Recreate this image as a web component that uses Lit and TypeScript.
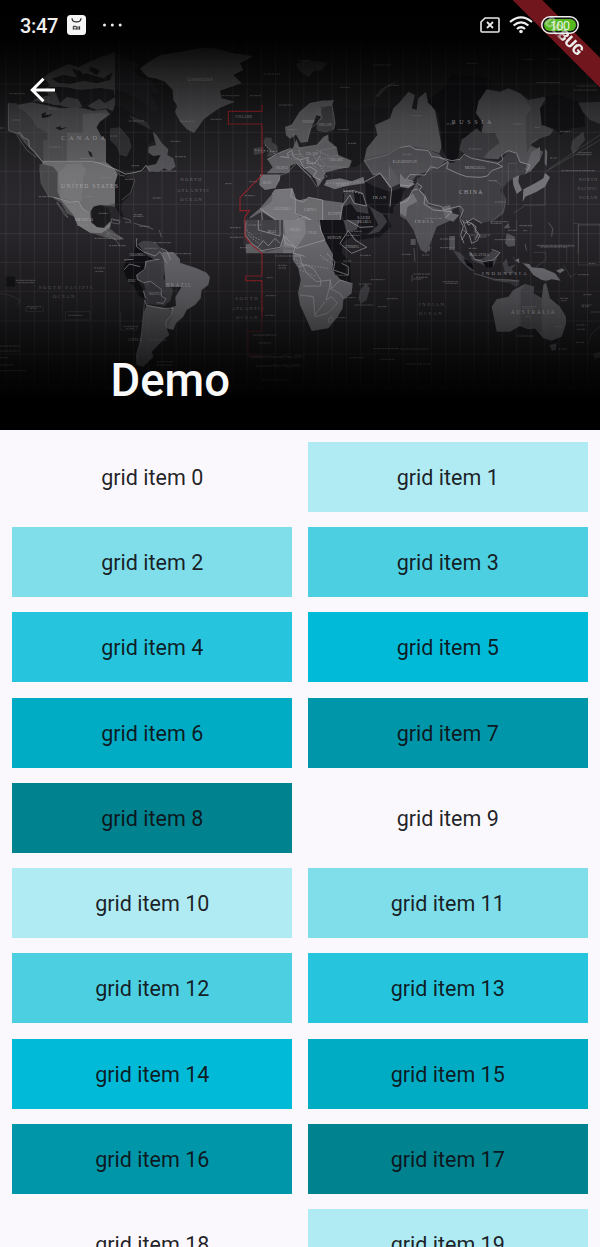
import { LitElement, html, svg, css } from "lit";
import { customElement } from "lit/decorators.js";

const SHADE_COUNT = 9;
const MERIDIANS = Array.from({ length: 43 }, (_, i) => 18 + i * 42.55);
const PARALLELS = [252, 397, 514, 613, 701, 787, 874, 963, 1062, 1166];

type Label = [string, number, number, number, number];
// text, x, y, size, letter spacing
const LABELS: Label[] = [
  ["CANADA", 184, 421, 19, 10],
  ["UNITED STATES", 184, 563, 17, 3.6],
  ["MEXICO", 224, 663, 14, 0],
  ["BRAZIL", 497, 860, 17, 3],
  ["RUSSIA", 1355, 372, 18, 11],
  ["CHINA", 1377, 582, 17, 4],
  ["MONGOLIA", 1394, 507, 11, 0.4],
  ["INDIA", 1244, 668, 14, 4],
  ["INDONESIA", 1446, 824, 15, 6.5],
  ["AUSTRALIA", 1532, 943, 17, 4.5],
  ["MALAYSIA", 1408, 769, 10, 1],
  ["KAZAKHSTAN", 1178, 490, 10, 0.5],
  ["IRAN", 1118, 597, 13, 3],
  ["SAUDI", 1072, 656, 11, 1],
  ["ARABIA", 1070, 668, 10, 1],
  ["ALGERIA", 820, 629, 12, 0],
  ["LIBYA", 913, 633, 12, 0],
  ["EGYPT", 984, 645, 12, 0],
  ["SUDAN", 982, 717, 12, 0],
  ["MALI", 803, 699, 10, 0],
  ["NIGER", 868, 692, 10, 0],
  ["CHAD", 922, 702, 10, 0],
  ["TURKEY", 1008, 557, 10, 0],
  ["ETHIOPIA", 1036, 743, 9, 0],
  ["CHILE", 385, 1022, 11, 2],
  ["PERU", 383, 847, 9, 0],
  ["BOLIVIA", 447, 886, 9, 0],
  ["COLOMBIA", 388, 769, 9, 0],
  ["FRANCE", 828, 506, 9, 0],
  ["SPAIN", 788, 553, 9, 0],
  ["POLAND", 918, 464, 9, 0],
  ["SWEDEN", 906, 370, 9, 0],
  ["FINLAND", 956, 379, 9, 0],
  ["NORWAY", 861, 391, 8, 0],
  ["GERMANY", 868, 465, 8, 0],
  ["UKRAINE", 988, 484, 9, 0],
  ["ICELAND", 706, 355, 10, 1],
  ["Greenland", 562, 244, 16, 1],
];
const OCEANS: Label[] = [
  ["NORTH", 541, 543, 14, 4],
  ["ATLANTIC", 532, 575, 14, 4],
  ["OCEAN", 541, 603, 14, 4],
  ["SOUTH  PACIFIC", 116, 867, 14, 5],
  ["OCEAN", 159, 894, 14, 4],
  ["SOUTH", 706, 899, 14, 5],
  ["ATLANTIC", 696, 930, 14, 4],
  ["OCEAN", 708, 958, 14, 4],
  ["NORTH", 1737, 542, 12, 3.5],
  ["PACIFIC", 1733, 570, 12, 2.2],
  ["OCEAN", 1737, 598, 12, 3],
  ["INDIAN", 1257, 918, 14, 5],
  ["OCEAN", 1257, 946, 14, 5],
  ["Coordinated Universal Time (UTC)", 742, 1074, 12, 0],
  ["Greenwich Mean Time (GMT)", 768, 1102, 11, 0],
];
// small captions drawn as thin strokes: x, y, width
const MARKS: [number, number, number][] = [
  [28, 281, 46], [36, 360, 26], [0, 384, 12], [148, 441, 36], [240, 475, 44], [300, 533, 32], [116, 590, 42],
  [205, 548, 26], [254, 590, 24], [395, 497, 22], [376, 538, 28], [484, 513, 44], [525, 470, 34], [512, 424, 30],
  [540, 364, 44], [386, 363, 46], [330, 408, 22], [458, 594, 24], [402, 644, 26], [400, 649, 30], [232, 676, 34],
  [418, 679, 30], [296, 640, 28], [338, 660, 20], [376, 667, 14], [283, 715, 54], [342, 717, 28], [327, 737, 50],
  [462, 728, 52], [434, 745, 40], [486, 761, 88], [282, 804, 32], [286, 814, 24], [48, 841, 58], [52, 848, 52],
  [80, 920, 44], [90, 925, 20], [206, 946, 42], [370, 979, 44], [378, 985, 24], [0, 1038, 62], [0, 1053, 60],
  [0, 1073, 24], [0, 1095, 42], [0, 1112, 80], [470, 1085, 50], [470, 1095, 48], [450, 1020, 50],
  [665, 287, 54], [750, 287, 34], [632, 358, 34], [836, 315, 42], [790, 222, 50], [895, 182, 32], [1014, 389, 32],
  [1044, 430, 26], [1020, 262, 30], [1120, 195, 54], [1164, 256, 32], [676, 551, 18], [734, 587, 30], [690, 683, 32],
  [690, 712, 40], [720, 743, 30], [748, 545, 24], [745, 675, 40], [825, 768, 54], [834, 796, 28], [836, 804, 22],
  [798, 887, 30], [796, 946, 28], [760, 1005, 70], [776, 1029, 38], [786, 1140, 76], [800, 833, 18],
  [911, 858, 40], [903, 886, 36], [966, 778, 30], [1006, 826, 40], [1040, 706, 40], [1052, 694, 34], [1080, 766, 32],
  [1030, 783, 24], [1112, 839, 42], [1076, 852, 40], [1064, 915, 56], [1036, 893, 30], [1160, 896, 34], [1134, 920, 28],
  [1010, 953, 30], [1120, 1046, 78], [1048, 1073, 44], [1140, 1078, 44], [1236, 347, 30], [1210, 463, 24],
  [1400, 190, 32], [1340, 372, 22], [1538, 372, 30], [1605, 382, 16], [1406, 447, 40], [1468, 542, 26],
  [1484, 606, 32], [1472, 665, 54], [1472, 670, 34], [1276, 655, 50], [1558, 677, 40], [1570, 692, 12],
  [1524, 691, 28], [1684, 512, 100], [1730, 464, 44], [1736, 458, 40], [1650, 474, 20], [1680, 394, 30],
  [1240, 822, 50], [1248, 832, 36], [1240, 837, 28], [1206, 763, 28], [1266, 765, 22], [1320, 717, 44],
  [1320, 743, 44], [1412, 705, 60], [1424, 711, 36], [1484, 719, 62], [1406, 745, 26], [1610, 736, 114],
  [1622, 741, 80], [1734, 824, 34], [1766, 791, 20], [1328, 845, 46], [1336, 850, 38], [1534, 843, 24],
  [1680, 895, 26], [1684, 902, 16], [1745, 915, 30], [1745, 920, 22], [1750, 884, 26], [1773, 936, 27], [1729, 975, 28],
  [1731, 988, 24], [1728, 1027, 24], [1565, 920, 44], [1567, 925, 36], [1577, 950, 16], [1550, 1008, 52],
  [1664, 980, 22], [1674, 1047, 28], [1200, 1047, 88], [1216, 1092, 78], [1610, 248, 70], [1730, 258, 60],
  [1722, 270, 70], [1570, 178, 30], [1640, 177, 40],
];

@customElement("world-map")
export class WorldMap extends LitElement {
  static styles = css`
    :host { display: block; width: 600px; height: 430px; }
    svg { display: block; width: 100%; height: 100%; }
    text { font-family: "Liberation Serif", serif; }
    .grid { stroke: #777479; stroke-width: 1.7; opacity: 0.36; fill: none; }
    .border { stroke: #a7a5a9; stroke-width: 2.1; fill: none; stroke-linejoin: round; }
    .thin { stroke: #858387; stroke-width: 1.6; fill: none; }
    .tag { fill: #aaa8ac; }
    .faint { fill: #747176; }
    .marks { stroke: #88858a; stroke-width: 3; stroke-dasharray: 7 2 4 1 10 2; opacity: 0.6; }
    .dateline { stroke: #a9222c; stroke-width: 3.4; fill: none; stroke-dasharray: 7 1.5; }
  `;

  render() {
    return html`<svg viewBox="0 0 1800 1290" aria-hidden="true">
      <defs>
        <linearGradient id="sea" x1="0" y1="0" x2="0" y2="1">
          <stop offset="0" stop-color="#111"/><stop offset=".3" stop-color="#222124"/>
          <stop offset=".45" stop-color="#2b292d"/><stop offset=".7" stop-color="#242226"/><stop offset="1" stop-color="#111"/>
        </linearGradient>
        <linearGradient id="shade" x1="0" y1="0" x2="0" y2="1">
          <stop offset="0" stop-color="#000"/><stop offset=".09" stop-color="#000" stop-opacity=".94"/>
          <stop offset=".18" stop-color="#000" stop-opacity=".58"/><stop offset=".28" stop-color="#000" stop-opacity=".24"/>
          <stop offset=".4" stop-color="#000" stop-opacity=".04"/><stop offset=".55" stop-color="#000" stop-opacity=".04"/>
          <stop offset=".7" stop-color="#000" stop-opacity=".28"/><stop offset=".82" stop-color="#000" stop-opacity=".62"/>
          <stop offset=".9" stop-color="#000" stop-opacity=".86"/><stop offset=".93" stop-color="#000"/><stop offset="1" stop-color="#000"/>
        </linearGradient>
      </defs>
      <rect width="1800" height="1290" fill="url(#sea)"/>

      <!-- Greenland and North America -->
      <g transform="translate(0 120)">
        <path fill="#59585b" d="M420 85L450 64L480 45L540 36L600 24L645 25L700 40L760 48L720 70L730 90L700 105L725 130L660 152L665 175L705 185L660 203L640 217L612 237L598 257L582 279L560 268L540 245L525 215L532 198L520 180L518 150L495 125L470 116L445 112L430 98Z"/>
        <path fill="#4d4c4f" d="M130 112L160 92L205 72L235 82L262 68L300 52L345 36V218L320 205L290 210L262 198L225 205L180 200L140 188L95 186L115 172L150 166L132 150L150 135Z"/>
        <path fill="#252428" d="M345 40L380 55L420 75L400 95L422 112L450 120L480 160L450 158L478 205L455 222L445 195L400 170L370 155L345 150Z"/>
        <path fill="#1f1e21" d="M155 116L190 104L225 112L260 100L310 115L338 96L330 120L290 130L250 122L210 132L175 128ZM140 140L200 142L240 150L300 144L340 150L345 172L315 190L298 176L272 192L250 206L235 178L200 170L180 190L168 160ZM216 86L240 92L254 108L230 110ZM270 78L300 92L290 106L268 92ZM60 186L115 184L126 194L180 196L220 208L198 210L120 204Z"/>
        <path fill="#545356" d="M50 195L95 187L140 196L185 205L230 202L250 205L280 212L318 208L330 222L300 245L290 270L305 292L318 300V368L345 385L355 400L345 430V500L310 496L280 496L272 515L272 545L290 562L312 566L334 544L330 566L350 582L370 596L345 600L310 590L270 578L235 555L222 530L200 520L185 490L160 475L145 470L122 430L118 385L128 365L108 345L75 310L55 285L25 272V190Z"/>
        <path fill="#454447" d="M25 190H50L56 204L75 215L98 240L110 262L142 278V300H130V366L108 348L90 322L65 285L45 278L25 272Z"/>
        <path fill="#727174" d="M128 365H200V366H318L345 382L352 402L345 432V490L322 496L300 496L280 500L270 516L250 505L236 482L210 485L180 474L172 456V395L160 380L128 372Z"/>
        <path fill="#7e7d80" d="M176 400L200 372L245 370L258 388L250 415L245 480L236 486L212 482L182 474Z" opacity=".7"/>
        <path fill="#656467" d="M200 278H248V222L300 218L330 222L302 242L290 262L305 290H318V366H200Z"/>
        <path fill="#4b4a4d" d="M118 372L158 382L172 398V456L180 474L150 470L125 430Z"/>
        <path fill="#7d7c7f" d="M180 476L210 486L236 484L250 506L270 520L274 548L292 562L312 564L332 544L330 562L305 580L270 578L232 555L222 528Z"/>
        <path fill="#1a191c" d="M318 300L302 285L290 262L300 245L330 235L345 195L380 210L410 230L440 245L460 275L462 300L445 316L442 335L460 345L480 340L476 372L440 378L426 395L400 396L375 412L345 388L318 366Z"/>
        <path fill="#353438" d="M330 265L360 262L388 295L395 320L380 350L360 345L350 320L330 300ZM385 225L440 245L455 270L405 245Z"/>
        <path fill="#18171a" d="M345 388L370 410L405 420L400 448L385 470L366 488L362 510L372 532L360 528L345 498V430L355 405Z"/>
        <path fill="#58575b" d="M458 275L470 285L486 310L505 328L502 345L520 355L527 380L508 392L492 385L476 396L450 394L440 378L468 372L482 345L460 348L445 338L446 320L468 315Z"/>
        <path fill="#1c1b1e" d="M125 222L138 216L136 226L158 222L146 231L126 234ZM165 264L184 258L180 265L202 262L182 271ZM264 332L275 338L278 352L270 348ZM274 512L286 498L304 496L325 506L332 530L328 542L310 560L292 561L276 544Z"/>
        <path class="border" d="M52 280L60 278L70 292L86 300L88 320L106 338L126 364H275L300 370L325 380L348 388L376 402L402 398L425 392L438 376L450 395M160 472L185 478L210 486L236 484L248 506L270 518"/>
        <path class="thin" d="M25 190V272L52 280M348 388L360 406L375 408M405 420L392 458L366 480M170 486L190 510L204 532L195 526L178 500ZM50 285L80 330L108 352M145 205L170 208M310 566L325 578L318 592M325 578L370 596"/>
        <path class="thin" d="M370 534L390 540L394 550M402 550L440 560L460 568M335 536L360 544L356 552L334 548Z"/>
      </g>

      <!-- Europe, Africa and the Middle East -->
      <g transform="translate(600 120)">
        <path fill="#39383b" d="M288 72L320 60L382 68L365 90L342 92L326 112L298 92ZM525 170L545 145L600 118L560 145L535 170Z"/>
        <path fill="#666568" d="M255 262L275 255L300 215L330 190L370 182L402 180L396 195L405 250L400 268L378 277L355 272L350 252L365 230L350 225L335 262L322 306L302 308L288 284L270 296L258 286Z"/>
        <path fill="#444346" d="M362 200L395 195L405 245L402 270L378 276L350 270L350 250L366 236Z"/>
        <path fill="#1b1a1d" d="M405 190L440 205L470 212L520 200L580 206L570 235L525 255L532 285L500 325L492 362L470 380L450 382L458 360L415 345L405 320L386 300L385 284L405 265Z"/>
        <path fill="#67666a" d="M202 358L245 335L278 325L290 298L298 322L350 315L370 290L385 284L386 302L410 322L415 345L455 362L448 382L415 388L375 398L372 415L355 440L345 415L312 385L290 370L270 378L268 398L235 400L200 400L218 382Z"/>
        <path fill="#737276" d="M180 404L240 404L240 420L225 445L195 450L178 435ZM380 420L420 415L455 424L490 410L495 430L440 438L405 448L372 436Z"/>
        <path fill="#454448" d="M195 292L215 294L215 305L232 318L235 346L200 350L208 332L190 310ZM160 325L190 320L192 340L162 345Z"/>
        <path fill="#67666a" d="M216 462L225 450L276 446L286 475L310 486L325 472L368 480L430 488L425 520L420 545L392 552V640L360 660L340 615L302 637L250 640H138L135 580L150 530L180 505Z"/>
        <path fill="#7a797d" d="M218 463L226 452L276 447L284 478L286 520L300 532L285 548L250 555L180 510L215 485ZM248 582L255 556L315 530L362 558L362 600L338 640H250Z"/>
        <path fill="#6f6e72" d="M286 484L315 476L365 480L370 555L315 532L290 520Z"/>
        <path fill="#343236" d="M142 540L185 515L248 556L250 580L190 600L130 596ZM130 590L190 582V530L195 530V600L130 615Z"/>
        <path fill="#17161a" d="M370 542L424 540L438 575L466 582L430 606L424 640H395L360 590ZM430 460L460 452L488 460L502 498L520 520L560 525L575 560L540 590L475 600L440 570L425 520ZM495 425L525 440L570 455L618 440L602 482L580 500L580 520L535 518L500 490Z"/>
        <path fill="#3c3b3f" d="M432 460L460 448L466 490L502 498L506 522L470 515L452 490L430 500ZM510 500L548 522L562 545L538 575L500 585L535 555L520 525Z"/>
        <path fill="#5b5a5e" d="M602 184L580 205L570 235L525 255L532 285L500 325L492 362L520 405L540 400L570 445L602 430Z"/>
        <path fill="#535256" d="M492 355L560 340L602 320V430L572 380L568 418L540 396L520 400Z"/>
        <path class="thin" d="M255 262L276 255L300 215L330 190L374 182M350 252L365 230L350 222L370 200L396 195L405 250L400 268M322 306L330 265L350 252M280 280L285 315L300 325L350 315L374 300L384 284M300 324L295 360L245 350M410 322L362 330L360 360L415 345M362 360L382 380L445 382M242 405L225 445M180 405H240L260 400L290 370L330 410L350 440L360 415L375 412"/>
        <path class="thin" d="M492 362L560 345L600 322M492 362L520 405L540 400L570 440M568 380V418"/>
        <path class="border" d="M202 358L245 335L272 325M290 370L318 398L334 412M240 350L266 352L262 340L275 330L280 350L300 360L325 352L322 370L345 370L360 348M300 360L312 385L330 380L350 392L340 410L362 420M216 462L225 450L276 446L286 475V520L315 532L370 555L370 542H420L430 488M276 446L272 470L290 480L310 486L325 472L368 480V555M180 505L250 556L315 530L362 558L360 590L395 640M430 455L460 452L488 460L500 498L462 490L450 465L425 500M185 515V515L190 580H135M250 556L248 582L190 600M495 425L540 400L575 445L570 500"/>
        <path stroke="#949398" stroke-width="3" stroke-dasharray="4 5" fill="none" d="M296 330L312 370M310 350L350 385M340 345L380 410M318 360L372 380M350 330L390 350M165 330L230 335M195 315L228 345M380 430L490 425M430 450L490 462"/>
      </g>

      <g transform="translate(600 660)">
        <path fill="#444348" d="M130 0H250V50L240 85L200 95L172 88L135 48Z"/>
        <path fill="#6e6d72" d="M250 0H360L362 30L380 60L400 90L398 120L405 165L458 190L455 220L430 240L428 265L412 292L385 325L335 333L325 310L300 255L294 220L302 180L295 145L278 120V90L242 88L250 40Z"/>
        <path fill="#838287" d="M250 0H315L318 40L290 85L250 80L256 45Z"/>
        <path fill="#151418" d="M355 0H440V45L425 75L425 100L450 125L452 190L420 178L398 150L400 105L372 55Z"/>
        <path fill="#48474c" d="M430 0H480L470 30L440 35ZM480 210L498 190L510 205L500 240L482 252L475 235Z"/>
        <path class="border" d="M138 5L135 45L155 70L185 92L240 82L252 48L290 85L340 70L375 60L362 30L358 0M175 0V30L240 48V0M250 42L256 70L285 80L280 100L312 108M170 85L190 62L205 78L225 55L240 70M280 108H300L305 130L320 160L350 185L390 180L395 205L420 180L452 190M295 140L318 135L340 145L362 180V198H310M300 225L340 230L345 290L382 280L412 250L395 230L378 240L388 205L420 220L430 235M392 178L388 205M425 75L455 100L500 82L465 60L445 32L420 70ZM380 100L405 125L400 150L445 165V140L425 130M345 285L375 245M442 0L480 22L520 20M384 298L395 290L400 300L388 308Z"/>
        <path stroke="#a6a5aa" stroke-width="2.5" stroke-dasharray="4 5" fill="none" d="M282 115L320 140M290 130L385 145M300 150L350 170M360 105L400 135M140 30L160 50L180 60M145 45L175 70M285 100L320 112"/>
      </g>

      <!-- South America -->
      <g transform="translate(0 660)">
        <path fill="#121115" d="M410 55L418 72L430 90L465 108L475 118L438 125L435 148L410 165L412 180L430 210L433 238L415 225L400 195L382 180L370 150L378 120L400 110Z"/>
        <path fill="#454449" d="M412 72L430 62L465 65L482 85L500 95L525 98L540 120L500 130L490 175L520 210L510 245L490 255L480 240L440 220L430 185L412 180L410 165L436 150L435 125L465 120L440 105Z"/>
        <path fill="#6f6e73" d="M487 95L520 96L540 118L540 128L590 145L620 158L630 172L625 195L605 210L602 235L585 255L560 270L550 290L528 310L520 330L498 325L506 292L518 275L512 262L528 258L526 232L545 200H497L492 130Z"/>
        <path fill="#5f5e63" d="M440 255L485 262L518 270L518 290L500 325L508 345L495 355L480 370L455 395L460 410L430 440L410 436L408 405L418 370L425 330L430 280Z"/>
        <path fill="#3e3d42" d="M430 212L455 190L480 200L498 235V258L440 252Z"/>
        <path class="border" d="M410 55L410 80L430 95L465 108L480 95L502 130M438 125L434 148L410 165L412 178L430 188L452 184L484 208V228L498 236L490 250L470 248M434 240L440 256L486 265L518 265L515 285L498 303V322M430 212L437 235M372 150L388 132L420 140M372 120L400 118M436 125L460 120L478 118M482 85L500 92L512 120"/>
        <path class="thin" d="M410 430L412 395L422 370L430 282L434 240M320 40L348 60L360 78M478 30L484 52"/>
        <path class="thin" opacity=".45" d="M0 220L30 226L60 240L54 256M78 260V275H130V260M196 275V300H270V275ZM362 275V330H410V318"/>
        <path fill="#151417" d="M17 170H45V200H17Z"/>
      </g>

      <!-- Asia -->
      <g transform="translate(1200 120)">
        <path fill="#5b5a5e" d="M0 185L25 155L45 165L35 205L50 210L55 175L78 155L82 180L105 210L118 280L125 320L118 340L50 320H0Z"/>
        <path fill="#131216" d="M82 185L130 145L155 100L180 110L240 105L275 125L262 160L235 180L230 220L245 250L240 280L185 295L175 350L160 362L155 390L145 360L125 325V300L115 220Z"/>
        <path fill="#58575b" d="M235 185L260 148L300 155L325 145L360 160L385 180L440 170L420 205L430 255L460 270L450 285L420 295L390 315L430 335L420 360L390 395L370 405L385 375L360 370L340 335L310 338L295 358L240 355L275 325L290 305L285 280L245 278L250 250L228 220Z"/>
        <path fill="#4b4a4e" d="M360 160L385 180L440 170L420 205L430 255L460 270L450 285L400 300L380 340L378 230L395 205Z"/>
        <path fill="#424145" d="M230 265L245 278L285 280L298 308L265 335L250 355L205 350L178 330L185 300Z"/>
        <path fill="#151418" d="M435 168L480 165L535 185L552 218L555 260L515 265L480 285L462 265L425 255L420 205L438 190Z"/>
        <path fill="#424145" d="M535 188L600 185V252L570 240L548 215ZM518 300L550 275L555 300L520 342L512 325Z"/>
        <path fill="#535256" d="M0 320L50 318L118 342L135 365L115 385L85 395L50 405L30 435L0 430Z"/>
        <path fill="#424145" d="M50 418L85 395L140 365L160 368L198 345L250 358L300 365L325 332L350 340L362 370L390 375L378 400L340 415L318 430L300 450L318 480L312 520L285 540L245 550L220 535L190 548L175 500L140 520L100 500L75 480L72 455L52 445Z"/>
        <path fill="#57565b" d="M0 485L25 478L50 425L55 445L78 465L85 495L130 510L155 540L110 560L80 640L62 630L40 570L20 540L0 528Z"/>
        <path fill="#78777b" d="M0 400L18 420L45 432L25 445L0 440ZM0 488L40 460L52 485L22 500L18 530L0 520ZM338 415L358 405L355 425L366 450L350 462L340 435ZM370 448L405 430L430 415L435 398L450 412L435 440L410 455L376 470L368 485Z"/>
        <path fill="#6b6a6e" d="M395 335L420 320L420 360L390 395L375 390ZM435 325L442 335L440 380L434 370ZM128 500L150 495L158 520L178 525L160 545L135 535Z"/>
        <path class="border" d="M0 322L30 318L45 328L85 332L95 350L118 352L145 365L112 385L92 380L75 405L30 404L18 418L40 425L30 438L0 435M118 352L155 362L180 358L192 343L215 355L240 360L290 370L308 380L275 392L262 408L240 412L200 410L172 400L140 385L145 368M290 372L308 360L305 345L325 332L350 340L360 366L390 375L378 400M52 430L66 440L58 450L75 470L85 490L125 500L130 510L180 498L190 510L180 535L195 550L220 535L245 550M0 490L22 482L38 450L52 448M75 470L72 492L100 510L155 515L135 535M190 545L200 575L185 600M200 545L215 550L235 580L225 600"/>
        <path class="thin" opacity=".6" d="M265 422H285L305 435M318 430L305 450L318 480L310 515L270 548M340 520L370 500L376 492M445 388L600 285M437 395L600 300M350 370H325V495M435 410V495H375M535 640V555H600"/>
      </g>

      <!-- South-east Asia and Australia -->
      <g transform="translate(1200 660)">
        <path fill="#56555a" d="M20 0H125L95 25L80 55L68 82L45 30ZM82 72L92 82L88 96L80 88ZM310 25L325 8L330 25ZM320 40L345 50V78L325 80L315 70ZM32 57H47V75H32ZM148 48H165V90H148Z"/>
        <path fill="#48474d" d="M158 90L180 98L205 125L225 155L210 150L180 122ZM208 95L225 118L248 116L278 92L298 100L280 140L250 135L215 120ZM308 130L320 115L325 140L348 132L335 148L345 160L315 160ZM222 160L280 178L320 176L360 182L340 190L285 183Z"/>
        <path fill="#0e0d12" d="M245 122H280L278 140L262 144ZM190 115L215 130L222 150L200 135Z"/>
        <path fill="#77767b" d="M368 130L388 132L395 142L430 145L465 160L482 182L455 178L440 182L425 180L400 165L385 145ZM345 120L357 115L358 130ZM468 152L485 145L495 150L480 160Z"/>
        <path fill="#3d3c41" d="M325 185L355 178L358 195L345 200ZM578 402L600 395V412L585 418Z"/>
        <path fill="#606065" d="M275 260L290 238L325 230L340 210L375 192L402 200L400 220L425 235L430 195L438 188L450 235L480 260L498 290L498 312L485 350L455 362L430 355L405 325L385 328L360 318L330 335L290 335L282 295Z"/>
        <path fill="#515055" d="M362 210L375 192L402 200L398 218L425 238V340L405 325L390 328L362 318Z"/>
        <path fill="#55545a" d="M448 375L470 370L468 390L456 392Z"/>
        <path class="border" d="M180 0L190 20L182 45L192 70M200 0L205 15L215 10L228 20L225 35L240 45L232 62L215 70L208 45L190 30M210 95L225 118L250 125L280 120L300 98L275 88"/>
        <path class="thin" d="M220 160L285 178L350 182M445 8L458 25L455 50M375 72L380 92M42 85L45 125M36 165V185"/>
        <path class="thin" opacity=".5" d="M415 80H525M520 10H535L535 135H600V12H535M500 80V125M345 125L340 110M350 0V30M400 97H437L438 120L408 140M530 160L510 170M490 135L515 175M600 320L575 340L565 370"/>
      </g>

      <g class="grid">
        ${MERIDIANS.map((x) => svg`<path d=${`M${x} 120V1166`}/>`)}
        ${PARALLELS.map((y) => svg`<path d=${`M0 ${y}H1800`}/>`)}
      </g>
      <g class="marks">${MARKS.map(([x, y, w]) => svg`<path d=${`M${x} ${y}h${w}`}/>`)}</g>
      <g class="faint">${OCEANS.map(([t, x, y, s, g]) => svg`<text x=${x} y=${y} font-size=${s} letter-spacing=${g}>${t}</text>`)}</g>
      <g class="tag">${LABELS.map(([t, x, y, s, g]) => svg`<text x=${x} y=${y} font-size=${s} letter-spacing=${g}>${t}</text>`)}</g>
      <path class="dateline" d="M786 315V334H685V372H786V525L720 593V632H748L735 650V710L755 735L786 760V828H737V842H786V955"/>
      <path class="dateline" opacity=".4" d="M786 955V994H744V1066H785"/>
      <rect width="1800" height="1290" fill="url(#shade)"/>
    </svg>`;
  }
}

@customElement("app-root")
export class AppRoot extends LitElement {
  static styles = css`
    :host { display: block; width: 600px; height: 1247px; overflow: hidden; background: #faf8fc; font-family: Roboto, sans-serif; position: relative; }
    .header { position: relative; height: 429.6px; background: #000; display: flex; flex-direction: column; overflow: hidden; color: #fff; }
    .map { position: absolute; inset: 0; }
    .status { position: relative; z-index: 2; height: 50px; box-sizing: border-box; display: flex; align-items: center; padding: 0 21px 0 20px; color: #eee; }
    .time { font-size: 20px; font-weight: 500; line-height: 24px; width: 47px; letter-spacing: -0.3px; padding-top: 2px; }
    .shop { width: 19px; height: 20px; }
    .dots { width: 20px; height: 6px; margin-left: 16px; }
    .right { margin-left: auto; display: flex; align-items: center; gap: 9px; }
    .battery { width: 38px; height: 18px; margin-left: -1px; }
    .bar { position: relative; flex: 1; padding: 26px 0 0 29px; }
    .back { display: block; width: 27px; height: 28px; }
    h1 { position: relative; margin: 0; padding: 0 0 22px 110.5px; font-size: 45.5px; line-height: 54px; font-weight: 500; letter-spacing: 0; color: #fafafa; }
    .banner { position: absolute; z-index: 1; left: 463.75px; top: 26px; width: 200px; height: 20.5px; transform: rotate(45deg); background: #70161c; }
    .banner-text { z-index: 3; background: none; display: flex; align-items: center; justify-content: center; color: #eee; font-size: 15px; font-weight: 900; line-height: 20px; -webkit-mask-image: linear-gradient(90deg, rgba(0,0,0,.4) 95px, #000 102px); mask-image: linear-gradient(90deg, rgba(0,0,0,.4) 95px, #000 102px); }
    .grid { display: grid; grid-template-columns: 1fr 1fr; grid-auto-rows: 70.03px; gap: 15.28px; padding: 12.2px; }
    .item { display: flex; align-items: center; justify-content: center; font-size: 21.5px; letter-spacing: 0; line-height: 30px; color: rgba(14, 14, 18, 0.93); padding-top: 2px; box-sizing: border-box; }
    .s0 { background: #faf8fc; } .s1 { background: #b0eaf3; } .s2 { background: #80ddea; }
    .s3 { background: #4dcfe2; } .s4 { background: #26c5dd; } .s5 { background: #00bad8; }
    .s6 { background: #00abc4; } .s7 { background: #0096aa; } .s8 { background: #00828f; }
  `;

  render() {
    return html`
      <header class="header">
        <world-map class="map"></world-map>
        <div class="status">
          <span class="time">3:47</span>
          <svg class="shop" viewBox="0 0 19 20"><rect width="19" height="20" rx="3.5" fill="#f5f5f5"/><path d="M5 3.2C5.3 8.2 13.7 8.2 14 3.2" fill="none" stroke="#222" stroke-width="1.2"/><path d="M6.3 14.7V11.3H8.8Q9.7 11.3 9.7 12.3V14.7M8 12.7V14.7M11 11.3V14.7M12.6 11.3V14.7" fill="none" stroke="#222" stroke-width="1"/></svg>
          <svg class="dots" viewBox="0 0 20 6" fill="#eee"><circle cx="2.5" cy="3" r="1.5"/><circle cx="10.3" cy="3" r="1.5"/><circle cx="18.2" cy="3" r="1.5"/></svg>
          <div class="right">
            <svg width="20" height="16" viewBox="0 0 20 16" fill="none" stroke="#e9e9e9" stroke-width="1.6"><path d="M5 1H18Q19 1 19 2V14Q19 15 18 15H2Q1 15 1 14V5Z"/><path d="M7 5L13 11M13 5L7 11" stroke-width="1.8"/></svg>
            <svg width="24" height="18" viewBox="0 0 24 18" fill="none" stroke="#eee" stroke-width="2.2"><path d="M1 6Q12-3.3 23 6M4.6 9.5Q12 3.3 19.4 9.5M8 13Q12 9.5 16 13"/><circle cx="12" cy="15.5" r="1.8" fill="#eee" stroke="none"/></svg>
            <svg class="battery" viewBox="0 0 38 18"><rect x=".8" y=".8" width="36.4" height="16.4" rx="8.2" fill="#131313" stroke="#eee" stroke-width="1.5"/><rect x="3" y="3" width="32" height="12" rx="6" fill="#55b81f"/><text x="19" y="13.5" text-anchor="middle" font-family="Roboto" font-size="12.5" font-weight="400" fill="#e9f3df" textLength="20">100</text></svg>
          </div>
        </div>
        <div class="bar">
          <svg class="back" viewBox="0 0 27 28" fill="none" stroke="#fff" stroke-width="3"><path d="M26 14H4M14.5 2.8L3.3 14L14.5 25.2"/></svg>
        </div>
        <h1>Demo</h1>
        <div class="banner"></div>
        <div class="banner banner-text">DEBUG</div>
      </header>
      <main class="grid">
        ${Array.from({ length: 20 }, (_, i) => html`<div class="item s${i % SHADE_COUNT}">grid item ${i}</div>`)}
      </main>`;
  }
}
